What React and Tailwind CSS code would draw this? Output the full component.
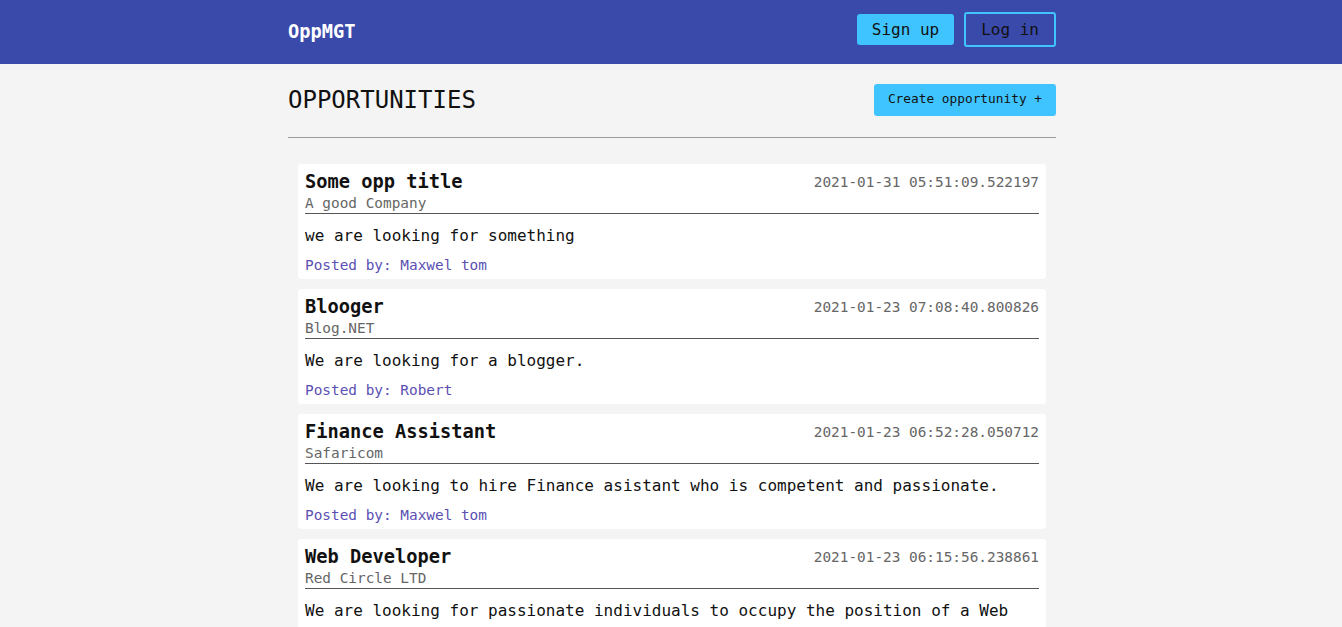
import React from "react";

const opportunities = [
  {
    title: "Some opp title",
    company: "A good Company",
    date: "2021-01-31 05:51:09.522197",
    description: "we are looking for something",
    author: "Maxwel tom",
  },
  {
    title: "Blooger",
    company: "Blog.NET",
    date: "2021-01-23 07:08:40.800826",
    description: "We are looking for a blogger.",
    author: "Robert",
  },
  {
    title: "Finance Assistant",
    company: "Safaricom",
    date: "2021-01-23 06:52:28.050712",
    description:
      "We are looking to hire Finance asistant who is competent and passionate.",
    author: "Maxwel tom",
  },
  {
    title: "Web Developer",
    company: "Red Circle LTD",
    date: "2021-01-23 06:15:56.238861",
    description:
      "We are looking for passionate individuals to occupy the position of a Web developer. The individual should have 2+ years experience with front end development and a good eye for design.",
    author: "Jane Doe",
  },
];

const OpportunityCard = ({ opp }) => (
  <div className="rounded-[3px] bg-white px-[7px] pt-[7px] pb-[5px]">
    <div className="flex items-start justify-between">
      <h3 className="text-[18.7px] font-bold leading-[22px] text-[#111]">
        {opp.title}
      </h3>
      <span className="pt-[2px] text-[14.4px] leading-[18px] text-[#666]">
        {opp.date}
      </span>
    </div>
    <div className="border-b border-[#555] text-[14.4px] leading-[20px] text-[#666]">
      {opp.company}
    </div>
    <p className="mt-[10px] text-[16px] leading-[24px] text-[#111]">
      {opp.description}
    </p>
    <p className="mt-[8px] text-[14.4px] leading-[18px] text-[#5b4fb3]">
      Posted by: {opp.author}
    </p>
  </div>
);

const App = () => {
  return (
    <div
      className="min-h-screen bg-[#f4f4f4]"
      style={{ fontFamily: '"DejaVu Sans Mono", "Liberation Mono", monospace' }}
    >
      <header className="h-16 bg-[#3a4aab]">
        <div className="mx-auto flex h-full max-w-[770px] items-start justify-between pl-[2px]">
          <span className="mt-[20px] text-[18.7px] font-bold leading-[24px] text-white">
            OppMGT
          </span>
          <div className="mt-[12px] flex items-center gap-[10px]">
            <button className="h-[31px] rounded-[3px] bg-[#40c4ff] px-[15px] text-[16px] text-[#111]">
              Sign up
            </button>
            <button className="h-[35px] rounded-[3px] border-2 border-[#40c4ff] px-[15px] text-[16px] text-[#111]">
              Log in
            </button>
          </div>
        </div>
      </header>

      <main className="mx-auto max-w-[770px] pl-[2px] pt-[20px]">
        <div className="flex h-[32px] items-center justify-between">
          <h2 className="text-[24px] font-medium leading-[32px] text-[#111]">
            OPPORTUNITIES
          </h2>
          <button className="h-[32px] rounded-[3px] bg-[#40c4ff] px-[14px] pb-[3px] text-[12.8px] text-[#111]">
            Create opportunity +
          </button>
        </div>
        <hr className="mt-[21px] border-t border-[#999]" />

        <div className="mx-[10px] mt-[26px] flex flex-col gap-[10px] pb-10">
          {opportunities.map((opp) => (
            <OpportunityCard key={opp.date} opp={opp} />
          ))}
        </div>
      </main>
    </div>
  );
};

export default App;
